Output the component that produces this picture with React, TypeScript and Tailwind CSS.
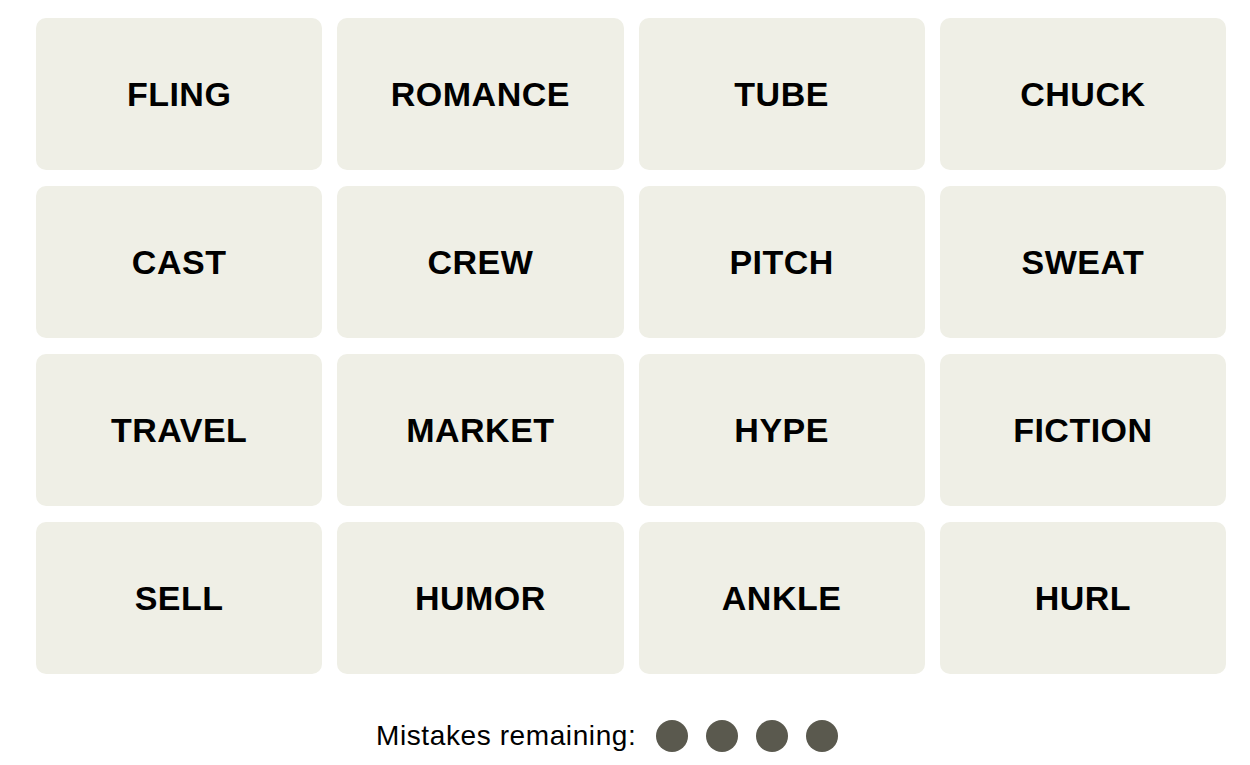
import React from 'react';

const words = [
  'FLING', 'ROMANCE', 'TUBE', 'CHUCK',
  'CAST', 'CREW', 'PITCH', 'SWEAT',
  'TRAVEL', 'MARKET', 'HYPE', 'FICTION',
  'SELL', 'HUMOR', 'ANKLE', 'HURL',
];

const Tile: React.FC<{ word: string }> = ({ word }) => (
  <button className="h-[152px] rounded-[10px] bg-[#efefe6] flex items-center justify-center text-[34px] font-bold tracking-[0.5px] text-black">
    {word}
  </button>
);

export default function App() {
  const mistakesLeft = 4;

  return (
    <div className="min-h-screen w-[1250px] bg-white pt-[18px] font-['Liberation_Sans',Arial,sans-serif]">
      {/* Word grid */}
      <div className="ml-[36px] w-[1190px] grid grid-cols-4 gap-x-[15px] gap-y-[16px]">
        {words.map((w) => (
          <Tile key={w} word={w} />
        ))}
      </div>

      {/* Mistakes counter */}
      <div className="mt-[46px] pl-[376px] flex items-center h-[32px]">
        <span className="text-[28px] leading-none tracking-[0.6px] text-black">Mistakes remaining:</span>
        <div className="ml-[20px] flex items-center gap-[18px]">
          {Array.from({ length: mistakesLeft }).map((_, i) => (
            <span key={i} className="w-[32px] h-[32px] rounded-full bg-[#5a594e]" />
          ))}
        </div>
      </div>
    </div>
  );
}
